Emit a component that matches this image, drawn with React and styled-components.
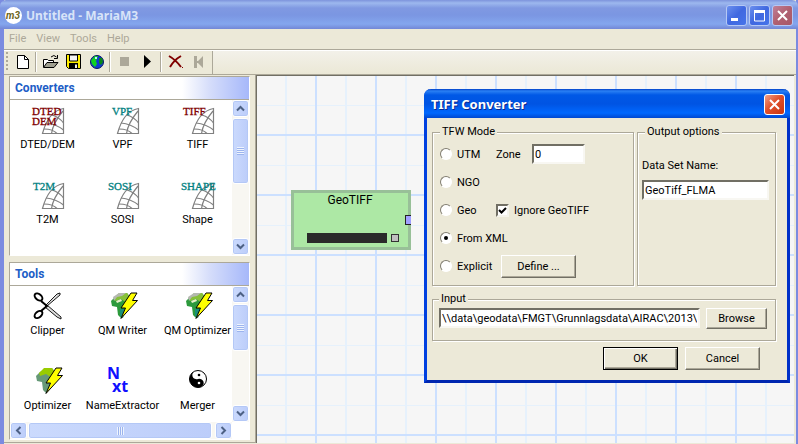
import React from "react";
import styled, { createGlobalStyle, css } from "styled-components";

const face = "#ece9d8";
const shade = "#aca899";
const dark = "#716f64";

const GlobalStyle = createGlobalStyle`
  * { box-sizing: border-box; }
  html, body { margin: 0; }
  body, button, input {
    font-family: Roboto, "Liberation Sans", sans-serif;
    font-size: 11px;
    color: #000;
  }
  svg { display: block; overflow: visible; }
`;

/* ---------- window frame ---------- */

const Window = styled.div`
  display: flex;
  flex-direction: column;
  min-height: 100vh;
  background: ${face};
  border: solid #7b8be0;
  border-width: 0 2px 0 4px;
`;

const TitleBar = styled.header`
  display: flex;
  align-items: center;
  gap: 4px;
  height: 29px;
  margin: 0 -2px 0 -4px;
  padding: 2px 5px 0;
  background: linear-gradient(#7d93dc 0, #9db8ee 3px, #8099e2 8px, #7b96e2 15px, #84a6ee 24px, #7387d6 29px);
  border-radius: 6px 6px 0 0;
`;

const Title = styled.h1`
  flex: 1;
  margin: 0;
  font: bold 12px/20px "Noto Sans", "Open Sans", sans-serif;
  color: #d8e4f8;
`;

const CaptionButtons = styled.div`
  display: flex;
  gap: 2px;
`;

const CaptionButton = styled.button`
  display: grid;
  place-items: center;
  width: 21px;
  height: 21px;
  padding: 0;
  border: 1px solid ${(p) => (p.$active ? "#fff" : "#b5c8f5")};
  border-radius: 3px;
  background: ${(p) =>
    p.$active
      ? "linear-gradient(135deg, #f0a088, #e0512c 45%, #c83410)"
      : p.$close
        ? "linear-gradient(135deg, #c08098, #b06070 50%, #a85868)"
        : "linear-gradient(135deg, #6c90ee, #4068e0 50%, #4674ea)"};
`;

const MenuBar = styled.nav`
  display: flex;
  gap: 10px;
  height: 20px;
  padding: 0 5px 2px;
  align-items: center;
`;

const MenuItem = styled.button`
  padding: 0;
  border: 0;
  background: none;
  color: ${shade};
`;

const ToolStrip = styled.div`
  display: flex;
  height: 26px;
  border-top: 1px solid ${shade};
  border-bottom: 1px solid ${shade};
  box-shadow: inset 0 1px #fff;
  background: linear-gradient(#f3f1ea, #ebe8d6);
`;

const ToolBar = styled.div`
  display: flex;
  align-items: center;
  margin-top: 1px;
  padding: 0 2px 2px;
  background: ${face};
  border-right: 1px solid ${shade};
`;

const Grip = styled.span`
  width: 2px;
  height: 20px;
  margin-right: 3px;
  background: repeating-linear-gradient(${shade} 0 2px, transparent 2px 4px);
`;

const Separator = styled.span`
  width: 2px;
  height: 20px;
  margin: 0 2px 0 1px;
  background: ${shade};
  border-right: 1px solid #fff;
`;

const ToolButton = styled.button`
  display: grid;
  place-items: center;
  width: 23px;
  height: 22px;
  padding: 0;
  border: 0;
  background: none;
`;

const Workspace = styled.main`
  flex: 1;
  display: grid;
  grid-template-columns: 252px minmax(0, 1fr);
  padding: 0 2px 1px 0;
`;

/* ---------- side panels ---------- */

const Sidebar = styled.aside`
  display: flex;
  flex-direction: column;
  gap: 6px;
  padding: 1px 5px 2px;
  border-right: 1px solid ${shade};
  border-bottom: 1px solid ${shade};
`;

const Panel = styled.section`
  display: flex;
  flex-direction: column;
  flex: ${(p) => (p.$grow ? "1" : "none")};
  border: solid;
  border-width: 1px;
  border-color: ${shade} #fff #fff ${shade};
  background: #fff;
`;

const PanelTitle = styled.h2`
  margin: 0;
  padding-left: 5px;
  font-size: 12px;
  line-height: 23px;
  height: 23px;
  color: #215dc6;
  border-bottom: 1px solid ${shade};
  background: linear-gradient(90deg, #fff 72%, #d4dcfa 84%, #a6b8fa);
`;

const PanelBody = styled.div`
  flex: 1;
  display: grid;
  grid-template-columns: 1fr 17px;
  grid-template-rows: 1fr auto;
`;

const Tiles = styled.div`
  display: grid;
  grid-template-columns: repeat(3, 75px);
  grid-auto-rows: 75px;
  width: 222px;
  overflow: hidden;
  height: ${(p) => (p.$short ? "136px" : "155px")};
`;

const Tile = styled.button`
  display: flex;
  flex-direction: column;
  align-items: center;
  justify-content: flex-start;
  padding: 3px 0 0;
  border: 0;
  background: none;
  line-height: 19px;
  white-space: nowrap;
`;

const IconText = styled.text`
  font: 11px "Liberation Serif", serif;
`;

const NxtText = styled.text`
  font: bold 16px "Noto Sans", sans-serif;
  fill: #1010ff;
`;

const ScrollBar = styled.div`
  display: flex;
  flex-direction: ${(p) => (p.$horizontal ? "row" : "column")};
  justify-content: space-between;
  gap: 1px;
  background: #f8f7f2;
`;

const raised = css`
  border: 1px solid #fff;
  border-radius: 3px;
  box-shadow: inset 0 0 0 1px #b4c8f6;
  background: linear-gradient(90deg, #cbdafd, #bccdfa);
`;

const ScrollArrow = styled.button`
  display: grid;
  place-items: center;
  flex: none;
  width: 17px;
  height: 17px;
  padding: 0;
  ${raised}
`;

const ScrollTrack = styled.div`
  flex: 1;
  display: flex;
  flex-direction: ${(p) => (p.$horizontal ? "row" : "column")};
`;

const Thumb = styled.div`
  display: grid;
  place-items: center;
  flex: 0 0 ${(p) => p.$size};
  ${raised}
`;

const ThumbGrip = styled.span`
  width: 7px;
  height: 8px;
  background: repeating-linear-gradient(
    ${(p) => (p.$horizontal ? "90deg" : "180deg")},
    #eef4fe 0 1px,
    #9cb4ee 1px 2px
  );
`;

/* ---------- diagram ---------- */

const Stage = styled.div`
  position: relative;
  min-width: 0;
  overflow: hidden;
  border: solid ${dark};
  border-width: 1px 0 0 1px;
  background-color: #f6f6f6;
  background-image:
    linear-gradient(90deg, transparent 58px, #cce0ff 58px),
    linear-gradient(transparent 58px, #cce0ff 58px),
    linear-gradient(90deg, transparent 28px, #e6f1fc 28px 30px, transparent 30px),
    linear-gradient(transparent 29px, #e6f1fc 29px 30px, transparent 30px);
  background-size: 60px 60px;
`;

const Node = styled.article`
  position: absolute;
  left: 34px;
  top: 114px;
  width: 120px;
  height: 60px;
  border: 3px solid #98c098;
  background: #ade8a5;
`;

const NodeName = styled.div`
  padding-right: 2px;
  font-size: 12px;
  line-height: 14px;
  text-align: center;
`;

const NodeStatus = styled.div`
  display: flex;
  align-items: center;
  gap: 4px;
  padding: 26px 0 0 13px;
`;

const NodeProgress = styled.span`
  width: 80px;
  height: 10px;
  background: #2a2a2a;
`;

const NodeLamp = styled.span`
  width: 8px;
  height: 8px;
  background: #c0c0c0;
  border: 1px solid #333;
`;

const Port = styled.span`
  position: absolute;
  right: -3px;
  top: 22px;
  width: 6px;
  height: 10px;
  background: #a0a0ff;
  border: 1px solid #222;
  border-right: 0;
`;

/* ---------- dialog ---------- */

const Dialog = styled.form`
  position: absolute;
  left: 167px;
  top: 13px;
  width: 366px;
  background: ${face};
  border: solid;
  border-width: 0 3px 3px;
  border-color: #0040e0 #0030c8 #0026b0 #0040e0;
  border-radius: 7px 7px 0 0;
`;

const DialogTitle = styled.div`
  display: flex;
  align-items: center;
  justify-content: space-between;
  height: 29px;
  margin: 0 -3px;
  padding: 1px 5px 0 7px;
  border-radius: 7px 7px 0 0;
  font: bold 13px "Noto Sans", "Open Sans", sans-serif;
  color: #fff;
  text-shadow: 1px 1px #0a2a90;
  background: linear-gradient(#0040c8 0, #2a80f4 2px, #0058e6 6px, #0054e3 15px, #0068ff 24px, #0048d0 29px);
`;

const DialogBody = styled.div`
  display: flex;
  flex-direction: column;
  gap: 6px;
  padding: 7px 11px 10px 5px;
`;

const Groups = styled.div`
  display: grid;
  grid-template-columns: 202px 1fr;
  gap: 3px;
`;

const Group = styled.fieldset`
  min-width: 0;
  margin: 0;
  padding: ${(p) => p.$padding};
  border: 1px solid ${shade};
  box-shadow: 1px 1px #fff, inset 1px 1px #fff;
`;

const Legend = styled.legend`
  margin-left: ${(p) => p.$indent || "0"};
  padding: 0 2px;
  line-height: 14px;
  background: ${face};
`;

const ModeRow = styled.div`
  display: grid;
  grid-template-columns: ${(p) => p.$columns || "56px 1fr"};
  align-items: center;
  height: 28px;
`;

const Choice = styled.label`
  display: flex;
  align-items: center;
  gap: 5px;
  white-space: nowrap;
`;

const Radio = styled.input.attrs({ type: "radio", name: "mode" })`
  appearance: none;
  display: grid;
  place-items: center;
  flex: none;
  width: 12px;
  height: 12px;
  margin: 0;
  border: 1px solid;
  border-color: #807d70 #fff #fff #807d70;
  border-radius: 50%;
  background: #fff;
  &:checked::before {
    content: "";
    width: 4px;
    height: 4px;
    border-radius: 50%;
    background: #000;
  }
`;

const CheckBoxFrame = styled.span`
  display: grid;
  width: 13px;
  height: 13px;
  & > * { grid-area: 1 / 1; place-self: center; pointer-events: none; }
  & > input:not(:checked) + svg { display: none; }
`;

const CheckBox = styled.input.attrs({ type: "checkbox" })`
  && { pointer-events: auto; }
  appearance: none;
  width: 13px;
  height: 13px;
  margin: 0;
  border: 2px solid;
  border-color: ${dark} #f5f4ec #f5f4ec ${dark};
  background: #fff;
`;

const TextBox = styled.input.attrs({ type: "text" })`
  width: ${(p) => p.$width || "100%"};
  min-width: 0;
  height: 20px;
  padding: 0 1px;
  border: 2px solid;
  border-color: ${dark} #f8f7f2 #f8f7f2 ${dark};
  background: #fff;
`;

const Button = styled.button`
  flex: none;
  width: ${(p) => p.$width || "75px"};
  height: ${(p) => p.$height || "23px"};
  padding: 0;
  background: ${face};
  border: 1px solid;
  border-color: ${(p) => (p.$default ? "#000" : `#fff ${dark} ${dark} #fff`)};
  box-shadow: ${(p) =>
    p.$default
      ? `inset 1px 1px #fff, inset -1px -1px ${dark}, inset -2px -2px ${shade}`
      : `inset -1px -1px ${shade}`};
`;

const OptionLabel = styled.label`
  display: flex;
  flex-direction: column;
  gap: 6px;
  line-height: 16px;
`;

const PathRow = styled.div`
  display: flex;
  gap: 6px;
`;

const Actions = styled.div`
  display: flex;
  justify-content: flex-end;
  gap: 7px;
  padding-right: 16px;
`;

/* ---------- drawings ---------- */

const Cross = () => (
  <svg width="13" height="13" viewBox="0 0 13 13" stroke="#fff" strokeWidth="2">
    <path d="M2 2l9 9M11 2l-9 9" />
  </svg>
);

const Logo = () => (
  <svg width="17" height="17" viewBox="0 0 17 17">
    <circle cx="8.5" cy="8.5" r="8.5" fill="#fff" />
    <text x="1" y="12" fontSize="10" fontWeight="bold" fontStyle="italic" fontFamily="Roboto, sans-serif" fill="#6b6420">
      m3
    </text>
  </svg>
);

const Arrow = ({ turn }) => (
  <svg width="9" height="9" viewBox="0 0 9 9" fill="none" stroke="#4d6185" strokeWidth="2">
    <path d="M1 6.5L4.5 3L8 6.5" transform={`rotate(${turn} 4.5 4.5)`} />
  </svg>
);

const MapIcon = ({ lines, color, x = 0 }) => (
  <svg width="32" height="32" viewBox="0 0 32 32">
    <g fill="none" stroke="#808080" strokeWidth="1.2">
      <path d="M10.500 30.500C13 21 18 8 31.500 5.500V30.500Z" />
      <path d="M12 26q9 0 13 4.500M14 20q10 1 17.500 7M20 12q7 2 11.500 8" />
      <path d="M19.500 30.500Q21 20 31 8" />
    </g>
    {lines.map((line, i) => (
      <IconText key={line} x={x} y={12 + i * 10} fill={color} stroke={color} strokeWidth="0.3">
        {line}
      </IconText>
    ))}
  </svg>
);

const Scissors = () => (
  <svg width="32" height="32" viewBox="0 0 32 32">
    <path d="M15 17L28 6V4L25 5 13 17ZM15 16L29 28V30L25 28 13 18Z" fill="#ddd" stroke="#000" strokeWidth="0.9" />
    <g fill="none" stroke="#000" strokeWidth="2">
      <path d="M9 12l6 5-6 5" />
      <ellipse cx="6.500" cy="8" rx="4.500" ry="2.800" transform="rotate(40 6.500 8)" />
      <ellipse cx="6.500" cy="25.500" rx="4.500" ry="2.800" transform="rotate(-40 6.500 25.500)" />
    </g>
  </svg>
);

const Africa = ({ plain }) => (
  <svg width="32" height="32" viewBox="0 0 32 32">
    <path d="M4 12l4-4 6-4h6l3 4-2 8-3 4-1 6-3 3-3-3-1-8-5-1Z" fill={plain ? "#669977" : "#2c9a3c"} />
    <path d="M7 9l5-5h8l3 4-3 6-6-4-6 2Z" fill={plain ? "#99cc00" : "#86c038"} />
    {!plain && (
      <>
        <path d="M6 8l6-4 7 0-4 3-5 1-3 4Z" fill="#b4b8b0" />
        <path d="M9 12l5-2 1 2-5 2Z" fill="#e8f0c8" />
        <path d="M13 20h5l-2 9-3-2Z" fill="#189078" />
      </>
    )}
    <path d="M24 4H30L25.500 11.500H30.500L19 24 14 29.500 18.500 19H14Z" fill="#ffff00" stroke="#000" strokeWidth="1" />
  </svg>
);

const NxtIcon = () => (
  <svg width="32" height="32" viewBox="0 0 32 32">
    <NxtText x="0" y="15">N</NxtText>
    <NxtText x="5" y="28">xt</NxtText>
  </svg>
);

const YinYang = () => (
  <svg width="32" height="32" viewBox="0 0 32 32">
    <circle cx="16" cy="15" r="8.500" fill="#fff" stroke="#000" />
    <path
      d="M16 6.500A4.250 4.250 0 0 0 16 15A4.250 4.250 0 0 1 16 23.500A8.500 8.500 0 0 1 16 6.500Z"
      fill="#000"
      transform="rotate(-20 16 15)"
    />
    <circle cx="17" cy="11" r="1.300" fill="#000" />
    <circle cx="17" cy="19" r="1.300" fill="#fff" />
  </svg>
);

const toolIcons = {
  New: (
    <svg width="12" height="14" viewBox="0 0 12 14">
      <path d="M.5.5h7l4 4v9H.5Z" fill="#fff" stroke="#000" />
      <path d="M7.500.5v4h4" fill="none" stroke="#000" />
    </svg>
  ),
  Open: (
    <svg width="17" height="15" viewBox="0 0 17 15">
      <path d="M1.500 13V5.500h4l1 1h5V9" fill="#fff" stroke="#000" />
      <path d="M1.500 13.500L5 8.500h11L12 13.500Z" fill="#a0a090" stroke="#000" />
      <path d="M9 3q3-3 5.500 0M15.500 1v3.500H12" fill="none" stroke="#000" />
    </svg>
  ),
  Save: (
    <svg width="15" height="15" viewBox="0 0 15 15">
      <path d="M.5.5h14v14h-12l-2-2Z" fill="#ffee00" stroke="#000" />
      <path d="M3.500 1h8v6h-8Z" fill="#f4f4f4" stroke="#000" />
      <path d="M3 9h9v6H3Z" fill="#000" />
      <path d="M9 10.500h2V14H9Z" fill="#eee" />
    </svg>
  ),
  Globe: (
    <svg width="14" height="14" viewBox="0 0 14 14">
      <circle cx="7" cy="7" r="6.500" fill="#1038d0" stroke="#081860" />
      <path d="M2 4l3-3 3 0-1 3-1 2 1 3-2 3-3-3-1-3Z" fill="#10d020" />
      <path d="M9 3l3 0 1 4-2 3-2-2Z" fill="#088818" />
      <path d="M5 2h2v2H5Z" fill="#c0f0ff" />
    </svg>
  ),
  Stop: (
    <svg width="9" height="9" viewBox="0 0 9 9">
      <path d="M0 0h9v9H0Z" fill={shade} />
    </svg>
  ),
  Play: (
    <svg width="7" height="13" viewBox="0 0 7 13">
      <path d="M0 0l7 6.500L0 13Z" fill="#000" />
    </svg>
  ),
  Delete: (
    <svg width="16" height="14" viewBox="0 0 16 14">
      <path d="M1 1q7 4 12 11M13 1Q6 5 2 12" fill="none" stroke="#800000" strokeWidth="2" />
      <path d="M14 12h1v1h-1Z" fill="#800000" />
    </svg>
  ),
  Rewind: (
    <svg width="10" height="12" viewBox="0 0 10 12">
      <path d="M0 0h3v12H0ZM9 0v12L3 6Z" fill={shade} />
      <path d="M2 5h3v2H2Z" fill={shade} />
    </svg>
  ),
};

/* ---------- parts ---------- */

const Scroll = ({ horizontal, size }) => (
  <ScrollBar $horizontal={horizontal}>
    <ScrollArrow aria-label={horizontal ? "Scroll left" : "Scroll up"}>
      <Arrow turn={horizontal ? -90 : 0} />
    </ScrollArrow>
    <ScrollTrack $horizontal={horizontal}>
      <Thumb $size={size}>
        <ThumbGrip $horizontal={horizontal} />
      </Thumb>
    </ScrollTrack>
    <ScrollArrow aria-label={horizontal ? "Scroll right" : "Scroll down"}>
      <Arrow turn={horizontal ? 90 : 180} />
    </ScrollArrow>
  </ScrollBar>
);

const red = "#800000";
const teal = "#008080";

const converters = [
  ["DTED/DEM", <MapIcon lines={["DTED", "DEM"]} color={red} />],
  ["VPF", <MapIcon lines={["VPF"]} color={teal} x={5} />],
  ["TIFF", <MapIcon lines={["TIFF"]} color={red} x={1} />],
  ["T2M", <MapIcon lines={["T2M"]} color={teal} x={1} />],
  ["SOSI", <MapIcon lines={["SOSI"]} color={teal} x={1} />],
  ["Shape", <MapIcon lines={["SHAPE"]} color={teal} x={-1} />],
];

const tools = [
  ["Clipper", <Scissors />],
  ["QM Writer", <Africa />],
  ["QM Optimizer", <Africa />],
  ["Optimizer", <Africa plain />],
  ["NameExtractor", <NxtIcon />],
  ["Merger", <YinYang />],
];

const TileList = ({ items, short }) => (
  <Tiles $short={short}>
    {items.map(([name, icon]) => (
      <Tile key={name}>
        {icon}
        {name}
      </Tile>
    ))}
  </Tiles>
);

const ToolGroup = ({ names }) =>
  names.map((name) => (
    <ToolButton key={name} aria-label={name}>
      {toolIcons[name]}
    </ToolButton>
  ));

const TiffDialog = () => (
  <Dialog onSubmit={(e) => e.preventDefault()} aria-label="TIFF Converter">
    <DialogTitle>
      TIFF Converter
      <CaptionButton type="button" $active aria-label="Close dialog">
        <Cross />
      </CaptionButton>
    </DialogTitle>
    <DialogBody>
      <Groups>
        <Group $padding="1px 6px 5px 7px">
          <Legend>TFW Mode</Legend>
          <ModeRow $columns="56px 36px 1fr">
            <Choice><Radio />UTM</Choice>
            <label htmlFor="zone">Zone</label>
            <TextBox id="zone" $width="53px" defaultValue="0" />
          </ModeRow>
          <ModeRow>
            <Choice><Radio />NGO</Choice>
          </ModeRow>
          <ModeRow>
            <Choice><Radio />Geo</Choice>
            <Choice>
              <CheckBoxFrame>
                <CheckBox defaultChecked />
                <svg width="7" height="7" viewBox="0 0 7 7">
                  <path d="M0 3l2.500 2.500L7 1" fill="none" stroke="#000" strokeWidth="2" />
                </svg>
              </CheckBoxFrame>
              Ignore GeoTIFF
            </Choice>
          </ModeRow>
          <ModeRow>
            <Choice><Radio defaultChecked />From XML</Choice>
          </ModeRow>
          <ModeRow $columns="61px 1fr">
            <Choice><Radio />Explicit</Choice>
            <Button type="button">Define ...</Button>
          </ModeRow>
        </Group>
        <Group $padding="19px 6px 5px 4px">
          <Legend $indent="3px">Output options</Legend>
          <OptionLabel>
            Data Set Name:
            <TextBox defaultValue="GeoTiff_FLMA" />
          </OptionLabel>
        </Group>
      </Groups>
      <Group $padding="2px 8px 11px 6px">
        <Legend>Input</Legend>
        <PathRow>
          <TextBox
            aria-label="Input path"
            defaultValue={"\\\\data\\geodata\\FMGT\\Grunnlagsdata\\AIRAC\\2013\\"}
          />
          <Button type="button" $width="61px" $height="21px">Browse</Button>
        </PathRow>
      </Group>
      <Actions>
        <Button $default>OK</Button>
        <Button type="button">Cancel</Button>
      </Actions>
    </DialogBody>
  </Dialog>
);

export default function App() {
  return (
    <>
      <GlobalStyle />
      <Window>
        <TitleBar>
          <Logo />
          <Title>Untitled - MariaM3</Title>
          <CaptionButtons>
            <CaptionButton aria-label="Minimize">
              <svg width="13" height="13"><path d="M1 9h7v3H1Z" fill="#fff" /></svg>
            </CaptionButton>
            <CaptionButton aria-label="Maximize">
              <svg width="13" height="13">
                <path d="M1.500 2h10v10h-10Z" fill="none" stroke="#fff" />
                <path d="M1 1h11v3H1Z" fill="#fff" />
              </svg>
            </CaptionButton>
            <CaptionButton $close aria-label="Close">
              <Cross />
            </CaptionButton>
          </CaptionButtons>
        </TitleBar>
        <MenuBar>
          {["File", "View", "Tools", "Help"].map((m) => (
            <MenuItem key={m}>{m}</MenuItem>
          ))}
        </MenuBar>
        <ToolStrip>
          <ToolBar>
            <Grip />
            <ToolGroup names={["New"]} />
            <Separator />
            <ToolGroup names={["Open", "Save", "Globe"]} />
            <Separator />
            <ToolGroup names={["Stop", "Play"]} />
            <Separator />
            <ToolGroup names={["Delete", "Rewind"]} />
          </ToolBar>
        </ToolStrip>
        <Workspace>
          <Sidebar>
            <Panel>
              <PanelTitle>Converters</PanelTitle>
              <PanelBody>
                <TileList items={converters} />
                <Scroll size="66px" />
              </PanelBody>
            </Panel>
            <Panel $grow>
              <PanelTitle>Tools</PanelTitle>
              <PanelBody>
                <TileList items={tools} short />
                <Scroll size="47px" />
                <Scroll horizontal size="184px" />
              </PanelBody>
            </Panel>
          </Sidebar>
          <Stage>
            <Node>
              <NodeName>GeoTIFF</NodeName>
              <NodeStatus>
                <NodeProgress />
                <NodeLamp />
              </NodeStatus>
              <Port />
            </Node>
            <TiffDialog />
          </Stage>
        </Workspace>
      </Window>
    </>
  );
}
